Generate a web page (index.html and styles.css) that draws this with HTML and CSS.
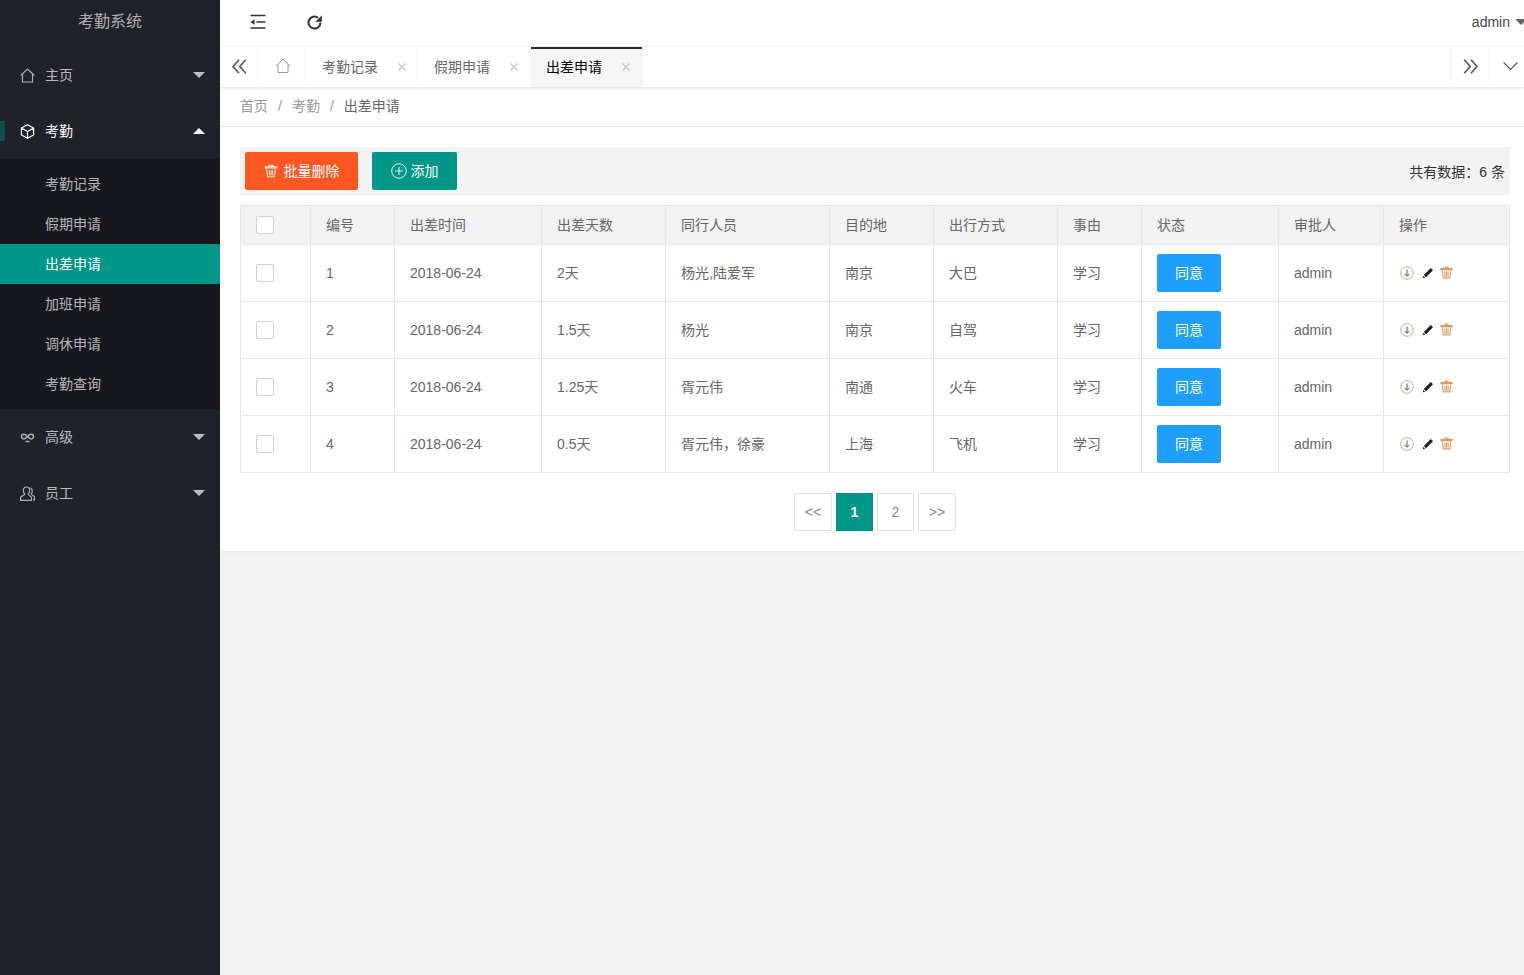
FILE: index.html
```html
<!DOCTYPE html>
<html lang="zh-CN">
<head>
<meta charset="utf-8">
<title>考勤系统</title>
<link rel="stylesheet" href="styles.css">
</head>
<body>
<div class="app">
  <aside class="side">
    <div class="logo">考勤系统</div>
    <nav>
      <a class="nav-item"><svg class="nav-ico" viewBox="0 0 15 15"><path d="M.6 7.500 7.500 1 14.400 7.500M2.500 6V14H12.500V6" /></svg><span>主页</span><i class="arrow"></i></a>
      <a class="nav-item open"><b class="mark"></b><svg class="nav-ico" viewBox="0 0 15 15"><path d="M7.500 .8 13.600 4V11L7.500 14.200 1.400 11V4ZM1.800 4.300 7.500 7.500 13.200 4.300M7.500 7.500V13.800" /></svg><span>考勤</span><i class="arrow up"></i></a>
      <div class="sub">
        <a>考勤记录</a><a>假期申请</a><a class="on">出差申请</a><a>加班申请</a><a>调休申请</a><a>考勤查询</a>
      </div>
      <a class="nav-item"><svg class="nav-ico infinity" viewBox="0 0 15 15"><path d="M7.500 6.500C6 4.800 5 4.300 3.800 4.300A2.300 2.300 0 0 0 3.800 8.900C5 8.900 6 8.300 7.500 6.500C9 4.800 10 4.300 11.200 4.300A2.300 2.300 0 0 1 11.200 8.900C10 8.900 9 8.300 7.500 6.500ZM5.500 11.500H9.500"/></svg><span>高级</span><i class="arrow"></i></a>
      <a class="nav-item"><svg class="nav-ico" viewBox="0 0 15 15"><path d="M6.500 1C4.300 1 3.300 2.600 3.300 4.600C3.300 6.200 4 7.300 4.800 8.100C4.500 9.400 1.800 10 .6 11.300V14.300H11.500V11.300C10.200 10 8.500 9.400 8.200 8.100C9 7.300 9.700 6.200 9.700 4.600C9.700 2.600 8.700 1 6.500 1ZM10.300 1.800C11.800 2.200 12.300 3.400 12.300 4.800C12.300 6 12 7 11.300 7.800C11.600 9 13.300 9.700 14.500 10.700V13.800H13"/></svg><span>员工</span><i class="arrow"></i></a>
    </nav>
  </aside>
  <main class="main">
    <header class="top">
      <div class="top-tools">
        <svg class="tool" viewBox="0 0 16 16"><path class="thick" d="M.5 1.500H15.500M6.500 8H15.500M.5 14H15.500"/><path class="fill" d="M4.500 5.200V10.800L.5 8Z"/></svg>
        <svg class="tool refresh" viewBox="0 0 15 15"><path class="thick" d="M13.500 7.500A6 6 0 1 1 11.200 2.800"/><path class="fill" d="M8.200 6.800H14.800V.5Z"/></svg>
      </div>
      <div class="user">admin<i class="caret"></i></div>
    </header>
    <div class="tabs">
      <button class="tab-btn"><svg class="chev" viewBox="0 0 15 15"><path d="M7 .8 1 7.500 7 14.200M13.800 .8 7.800 7.500 13.800 14.200"/></svg></button>
      <a class="home"><svg class="home-ico" viewBox="0 0 16 16"><path d="M.8 8 8 1 15.200 8M3 6.500V14.500H13V6.500"/></svg></a>
      <a class="tab">考勤记录<svg class="close" viewBox="0 0 8 8"><path d="M.5 .5 7.500 7.500M7.500 .5 .5 7.500"/></svg></a>
      <a class="tab">假期申请<svg class="close" viewBox="0 0 8 8"><path d="M.5 .5 7.500 7.500M7.500 .5 .5 7.500"/></svg></a>
      <a class="tab active">出差申请<svg class="close" viewBox="0 0 8 8"><path d="M.5 .5 7.500 7.500M7.500 .5 .5 7.500"/></svg></a>
      <div class="tabs-right">
        <button class="tab-btn r1"><svg class="chev" viewBox="0 0 15 15"><path d="M1.200 .8 7.200 7.500 1.200 14.200M8 .8 14 7.500 8 14.200"/></svg></button>
        <button class="tab-btn r2"><svg class="chev thin" viewBox="0 0 15 15"><path d="M.6 3.500 7.500 10.500 14.400 3.500"/></svg></button>
      </div>
    </div>
    <div class="crumb"><span>首页</span><s>/</s><span>考勤</span><s>/</s><span class="cur">出差申请</span></div>
    <section class="panel">
      <div class="toolbar">
        <div class="actions">
          <a class="btn danger"><svg class="btn-trash" viewBox="0 0 16 16"><path d="M1.500 3.200H14.500V4.500H1.500ZM5.500 3 6 1.500H10L10.500 3M3 5.500 4 14.500H12L13 5.500M6 7V13M8 7V13M10 7V13"/></svg>批量删除</a>
          <a class="btn teal"><svg class="btn-plus" viewBox="0 0 16 16"><circle cx="8" cy="8" r="7.300"/><path d="M8 4V12M4 8H12"/></svg>添加</a>
        </div>
        <div class="count">共有数据：6 条</div>
      </div>
      <table class="grid">
        <colgroup><col class="c1"><col class="c2"><col class="c3"><col class="c4"><col class="c5"><col class="c6"><col class="c7"><col class="c8"><col class="c9"><col class="c10"><col class="c11"></colgroup>
        <thead>
          <tr><th><i class="check"></i></th><th>编号</th><th>出差时间</th><th>出差天数</th><th>同行人员</th><th>目的地</th><th>出行方式</th><th>事由</th><th>状态</th><th>审批人</th><th>操作</th></tr>
        </thead>
        <tbody>
          <tr><td><i class="check"></i></td><td>1</td><td>2018-06-24</td><td>2天</td><td>杨光,陆爱军</td><td>南京</td><td>大巴</td><td>学习</td><td><a class="agree">同意</a></td><td>admin</td><td><div class="ops"><svg class="op-down" viewBox="0 0 14 14"><circle cx="7" cy="7" r="6.300"/><path d="M7 3.500V10M4.500 7.800 7 10.300 9.500 7.800"/></svg><svg class="op-pen" viewBox="0 0 12 12"><path d="M8.800 1 11 3.200 4 10.200 1.800 8ZM1.300 8.800 3.200 10.700.8 11.200Z"/></svg><svg class="op-trash" viewBox="0 0 14 14"><path d="M1 2.800H13V3.900H1ZM5 2.600 5.500 1.200H8.500L9 2.600M2.500 4.800 3.400 12.800H10.600L11.500 4.800M5.300 6V11.500M7 6V11.500M8.700 6V11.500"/></svg></div></td></tr>
          <tr><td><i class="check"></i></td><td>2</td><td>2018-06-24</td><td>1.5天</td><td>杨光</td><td>南京</td><td>自驾</td><td>学习</td><td><a class="agree">同意</a></td><td>admin</td><td><div class="ops"><svg class="op-down" viewBox="0 0 14 14"><circle cx="7" cy="7" r="6.300"/><path d="M7 3.500V10M4.500 7.800 7 10.300 9.500 7.800"/></svg><svg class="op-pen" viewBox="0 0 12 12"><path d="M8.800 1 11 3.200 4 10.200 1.800 8ZM1.300 8.800 3.200 10.700.8 11.200Z"/></svg><svg class="op-trash" viewBox="0 0 14 14"><path d="M1 2.800H13V3.900H1ZM5 2.600 5.500 1.200H8.500L9 2.600M2.500 4.800 3.400 12.800H10.600L11.500 4.800M5.300 6V11.500M7 6V11.500M8.700 6V11.500"/></svg></div></td></tr>
          <tr><td><i class="check"></i></td><td>3</td><td>2018-06-24</td><td>1.25天</td><td>胥元伟</td><td>南通</td><td>火车</td><td>学习</td><td><a class="agree">同意</a></td><td>admin</td><td><div class="ops"><svg class="op-down" viewBox="0 0 14 14"><circle cx="7" cy="7" r="6.300"/><path d="M7 3.500V10M4.500 7.800 7 10.300 9.500 7.800"/></svg><svg class="op-pen" viewBox="0 0 12 12"><path d="M8.800 1 11 3.200 4 10.200 1.800 8ZM1.300 8.800 3.200 10.700.8 11.200Z"/></svg><svg class="op-trash" viewBox="0 0 14 14"><path d="M1 2.800H13V3.900H1ZM5 2.600 5.500 1.200H8.500L9 2.600M2.500 4.800 3.400 12.800H10.600L11.500 4.800M5.300 6V11.500M7 6V11.500M8.700 6V11.500"/></svg></div></td></tr>
          <tr><td><i class="check"></i></td><td>4</td><td>2018-06-24</td><td>0.5天</td><td>胥元伟，徐豪</td><td>上海</td><td>飞机</td><td>学习</td><td><a class="agree">同意</a></td><td>admin</td><td><div class="ops"><svg class="op-down" viewBox="0 0 14 14"><circle cx="7" cy="7" r="6.300"/><path d="M7 3.500V10M4.500 7.800 7 10.300 9.500 7.800"/></svg><svg class="op-pen" viewBox="0 0 12 12"><path d="M8.800 1 11 3.200 4 10.200 1.800 8ZM1.300 8.800 3.200 10.700.8 11.200Z"/></svg><svg class="op-trash" viewBox="0 0 14 14"><path d="M1 2.800H13V3.900H1ZM5 2.600 5.500 1.200H8.500L9 2.600M2.500 4.800 3.400 12.800H10.600L11.500 4.800M5.300 6V11.500M7 6V11.500M8.700 6V11.500"/></svg></div></td></tr>
        </tbody>
      </table>
      <div class="pager">
        <a class="w38">&lt;&lt;</a><a class="cur-page">1</a><a class="w37">2</a><a class="w38">&gt;&gt;</a>
      </div>
    </section>
  </main>
</div>
</body>
</html>
```

FILE: styles.css
```css
* { box-sizing: border-box; }
html, body { margin: 0; padding: 0; height: 100%; overflow: hidden; }
body {
  font-family: "Liberation Sans", "Noto Sans CJK SC", sans-serif;
  font-size: 14px;
  line-height: 20px;
  color: #666;
  background: #f2f2f2;
}
a { text-decoration: none; color: inherit; display: block; }
i, em, s { font-style: normal; text-decoration: none; }
svg { display: block; flex: none; }

.app { display: flex; height: 975px; width: 1524px; }

/* sidebar */
.side { width: 220px; flex: none; background: #20222a; color: rgba(255,255,255,.7); }
.logo {
  height: 47px; padding-bottom: 4px;
  display: flex; align-items: center; justify-content: center;
  font-size: 16px; color: rgba(255,255,255,.65);
  box-shadow: 0 1px 1px rgba(0,0,0,.08);
}
.nav-item {
  position: relative; height: 56px; padding: 0 15px 0 20px;
  display: flex; align-items: center;
}
.nav-item span { margin-left: 10px; }
.nav-ico { width: 15px; height: 15px; fill: none; stroke: currentColor; stroke-width: 1.200; opacity: .9; }
.nav-ico.infinity { stroke-width: 1.500; }
.nav-item.open { color: #fff; }
.nav-item.open .nav-ico { opacity: 1; }
.mark { position: absolute; left: 0; top: 18px; width: 5px; height: 20px; background: #0d4f4b; }
.arrow {
  margin-left: auto; width: 0; height: 0;
  border: 6px solid transparent; border-top-color: rgba(255,255,255,.7); border-bottom-width: 0;
}
.arrow.up { border-top-width: 0; border-bottom: 6px solid #fff; }
.sub { background: #16181d; padding: 5px 0; }
.sub a { height: 40px; line-height: 40px; padding-left: 45px; color: rgba(255,255,255,.7); }
.sub a.on { background: #009688; color: #fff; }

/* main */
.main { flex: 1; min-width: 0; }
.top {
  height: 47px; background: #fff; padding-left: 30px;
  display: flex; align-items: center; justify-content: space-between;
  border-bottom: 1px solid #f6f6f6;
  padding-bottom: 2px;
}
.top-tools { display: flex; align-items: center; gap: 41px; }
.tool { width: 16px; height: 16px; }
.tool.refresh { width: 15px; height: 15px; }
.thick { fill: none; stroke: #333; stroke-width: 1.700; }
.refresh .thick { stroke-width: 2; }
.fill { fill: #333; }
.user { display: flex; align-items: center; color: #444; }
.caret {
  margin-left: 5px; margin-right: -3px; width: 0; height: 0;
  border: 6px solid transparent; border-top-color: #666; border-bottom-width: 0;
}

.tabs {
  height: 40px; background: #fff; display: flex; position: relative;
  box-shadow: 0 1px 2px rgba(0,0,0,.12);
}
.tab-btn {
  width: 40px; height: 40px; background: #fff; padding: 0; border: 0;
  border-right: 1px solid #f6f6f6;
  display: flex; align-items: center; justify-content: center;
}
.chev { width: 15px; height: 15px; fill: none; stroke: #555; stroke-width: 1.600; margin-top: -2px; }
.chev.thin { stroke-width: 1.100; }
.home {
  width: 46px; height: 40px; border-right: 1px solid #f6f6f6;
  display: flex; align-items: center; justify-content: center;
}
.home-ico { width: 16px; height: 16px; fill: none; stroke: #999; stroke-width: 1; margin-top: -3px; }
.tab {
  width: 112px; height: 40px; padding: 0 0 0 16px; line-height: 40px;
  color: #666; border-right: 1px solid #f6f6f6; position: relative; white-space: nowrap;
}
.close { position: absolute; left: 92px; top: 16px; width: 8px; height: 8px; fill: none; stroke: #c4c4c4; stroke-width: 1.100; }
.tab.active {
  width: 112px; margin-left: 1px; padding-left: 15px; background: #f6f6f6; color: #000; border-right: 0;
}
.tab.active .close { left: 91px; }
.tab.active::before {
  content: ""; position: absolute; left: 0; right: 1px; top: 0; height: 2px; background: #292b34;
}
.tabs-right { margin-left: auto; display: flex; }
.tab-btn.r1 { width: 40px; border-left: 1px solid #f6f6f6; border-right: 1px solid #f6f6f6; }
.tab-btn.r2 { width: 34px; border: 0; padding-left: 6px; }

.crumb {
  height: 40px; background: #fff; border-bottom: 1px solid #e6e6e6;
  padding: 0 0 2px 20px; display: flex; align-items: center; color: #999;
}
.crumb s { margin: 0 10px; color: #999; font-size: 14px; }
.crumb .cur { color: #666; }

.panel {
  height: 424px; background: #fff; padding: 20px 14px 0 20px;
  box-shadow: 0 1px 2px rgba(0,0,0,.05);
}
.toolbar {
  height: 48px; background: #f2f2f2; padding: 5px;
  display: flex; justify-content: space-between; align-items: center;
}
.actions { display: flex; gap: 14px; }
.btn {
  height: 38px; border-radius: 2px; color: #fff; display: flex; align-items: center; justify-content: center;
}
.btn.danger { width: 113px; background: #ff5722; }
.btn.teal { width: 85px; background: #009688; }
.btn-trash { width: 14px; height: 14px; fill: none; stroke: rgba(255,255,255,.9); stroke-width: 1.200; margin-right: 6px; }
.btn-plus { width: 16px; height: 16px; fill: none; stroke: #fff; stroke-width: .9; margin-right: 4px; }
.count { color: #333; padding-top: 1px; }

.grid {
  width: 1269px; margin-top: 10px; border-collapse: collapse; table-layout: fixed; background: #fff;
}
.c1 { width: 70px; } .c2 { width: 84px; } .c3 { width: 147px; } .c4 { width: 124px; }
.c5 { width: 164px; } .c6 { width: 104px; } .c7 { width: 124px; } .c8 { width: 84px; }
.c9 { width: 137px; } .c10 { width: 105px; } .c11 { width: 126px; }
.grid th, .grid td {
  border: 1px solid #e6e6e6; padding: 0 15px; text-align: left; font-weight: 400;
  color: #666; white-space: nowrap;
}
.grid th { background: #f2f2f2; height: 39px; }
.grid td { height: 57px; }
.check {
  display: block; width: 18px; height: 18px; background: #fff;
  border: 1px solid #d2d2d2; border-radius: 2px;
}
.agree {
  width: 64px; height: 38px; line-height: 38px; text-align: center;
  background: #1e9fff; color: #fff; border-radius: 2px;
}
.ops { display: flex; align-items: center; gap: 8px; margin-top: -1px; padding-left: 1px; }
.op-down { width: 14px; height: 14px; fill: none; stroke: #b3a592; stroke-width: .9; }
.op-down path { stroke: #6b5230; stroke-width: 1; }
.op-pen { width: 12px; height: 12px; fill: #222; }
.op-trash { width: 13px; height: 13px; fill: none; stroke: #dd9a62; stroke-width: 1.150; margin-left: -2px; }

.pager { display: flex; justify-content: center; gap: 4px; margin-top: 20px; }
.pager a {
  height: 38px; line-height: 36px; text-align: center; border: 1px solid #e2e2e2; color: #888;
}
.pager .w38 { width: 38px; }
.pager .w37 { width: 37px; }
.pager .cur-page { width: 37px; background: #009688; border-color: #009688; color: #fff; font-weight: 700; }
```
